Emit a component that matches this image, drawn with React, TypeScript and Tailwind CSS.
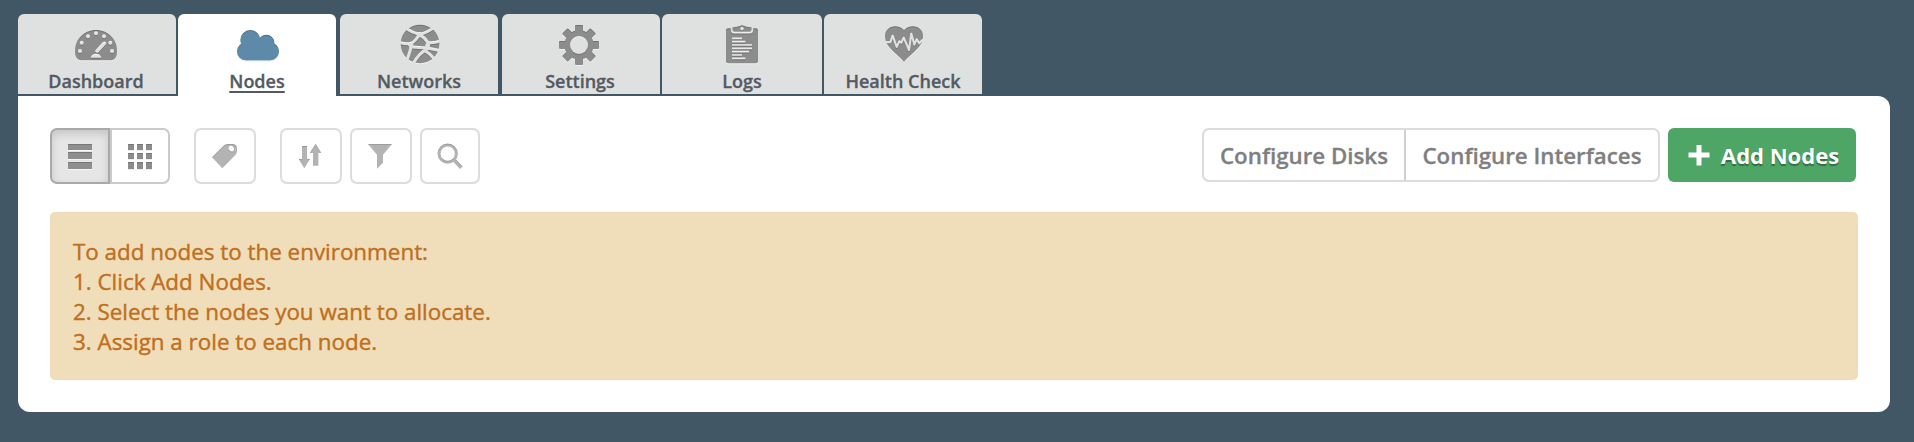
import React from "react";

type IconProps = { id: string; box: string; className: string; main: string; dark: string; light?: string; children: React.ReactNode };

// Letterpress icon: dark inner edge on top, light rim below. Drawn at 3 units per pixel.
function Engraved({ id, box, className, main, dark, light = "none", children }: IconProps) {
  return (
    <svg viewBox={box} className={className}>
      <defs>
        <mask id={id} maskUnits="userSpaceOnUse" x="-1000" y="-1000" width="3000" height="3000">
          {children}
        </mask>
      </defs>
      <g transform="translate(0 3)"><g mask={`url(#${id})`}><rect x="-900" y="-900" width="2800" height="2800" fill={light} /></g></g>
      <g mask={`url(#${id})`}>
        <rect x="-900" y="-900" width="2800" height="2800" fill={dark} />
        <g transform="translate(0 3)"><g mask={`url(#${id})`}><rect x="-900" y="-900" width="2800" height="2800" fill={main} /></g></g>
      </g>
    </svg>
  );
}

const G = { main: "#8c8c8c", dark: "#727272", light: "#f1f2f2" };
const S = { main: "#b3b3b3", dark: "#9b9b9b" };

const Dashboard = () => (
  <Engraved id="dash" box="222 87 132 102" className="mt-[6px] -ml-[2px] h-[34px] w-[44px]" {...G}>
    <path fill="#fff" d="M225 153C225 117 253 90 288 90S351 117 351 153C351 171 345 181 330 181H246C231 181 225 171 225 153Z" />
    <g fill="#000">
      {[[240, 153], [245, 128], [264, 109], [288, 100], [312, 109], [331, 128], [336, 153]].map(([x, y]) => <circle key={x} cx={x} cy={y} r="6" />)}
      <path d="M285 152 308 127Q318 121 319 131L294 158Q286 159 285 152ZM272 173Q275 161 288 161T304 173Z" />
    </g>
  </Engraved>
);

const Cloud = () => (
  <Engraved id="cloud" box="708 87 132 102" className="mt-[6px] ml-[2px] h-[34px] w-[44px]" main="#5c8aa8" dark="#4a6f87" light="#e3eaef">
    <g fill="#fff">
      <circle cx="751" cy="120" r="30" /><circle cx="799" cy="128" r="24" />
      <circle cx="738" cy="154" r="27" /><circle cx="810" cy="154" r="27" />
      <path d="M738 125H810V181H738Z" />
    </g>
  </Engraved>
);

const Networks = () => (
  <Engraved id="net" box="207 69 126 129" className="ml-[2px] h-[43px] w-[42px]" {...G}>
    <circle cx="270" cy="132" r="58" fill="#fff" />
    <g stroke="#000" strokeWidth="9" fill="none">
      <path d="M226 84Q246 98 268 103Q292 98 312 82M268 103Q258 122 242 131Q226 133 208 127M268 103Q284 112 294 128Q315 130 335 121M242 131Q244 144 238 160L230 184M241 140Q268 142 292 144L332 152M294 128V146Q268 158 249 192M282 150Q302 162 314 178" />
    </g>
    <g fill="#000"><circle cx="268" cy="104" r="8" /><circle cx="242" cy="133" r="8" /><circle cx="293" cy="136" r="7" /></g>
  </Engraved>
);

const Gear = () => (
  <Engraved id="gear" box="681 69 132 132" className="-ml-[4px] h-[44px] w-[44px]" {...G}>
    <g fill="#fff">
      <circle cx="747" cy="135" r="44" />
      {[0, 45, 90, 135].map((a) => <rect key={a} x="735" y="75" width="24" height="120" rx="3" transform={`rotate(${a} 747 135)`} />)}
    </g>
    <circle cx="747" cy="135" r="27" fill="#000" />
  </Engraved>
);

const Logs = () => (
  <Engraved id="logs" box="252 69 108 129" className="h-[43px] w-[36px]" {...G}>
    <path fill="#fff" d="M258 91Q258 85 264 85H348Q354 85 354 91V184Q354 190 348 190H264Q258 190 258 184Z" />
    <path fill="#fff" stroke="#000" strokeWidth="5" d="M275 80Q292 80 306 73Q320 80 337 80V90Q337 98 329 98H283Q275 98 275 90Z" />
    <path fill="#000" d="M250 60H274V83H250ZM338 60H362V83H338Z" />
    <circle cx="306" cy="86" r="5" fill="#000" />
    <path stroke="#000" strokeWidth="5" d="M276 115H306M276 125H316M276 135H336M276 145H336M276 155H327M276 165H306M276 175H316" />
  </Engraved>
);

const Heart = () => (
  <Engraved id="heart" box="729 75 126 117" className="mt-[2px] ml-[2px] h-[39px] w-[42px]" {...G}>
    <path fill="#fff" d="M792 91C781 76 760 76 749 83C734 92 731 110 740 130C750 151 774 164 792 186C810 164 834 151 844 130C853 110 850 92 835 83C824 76 803 76 792 91Z" />
    <path fill="none" stroke="#000" strokeWidth="6" strokeLinejoin="round" d="M733 127H751L758 107L770 141L778 124L784 128L791 113L807 150L814 101L823 134L830 118L838 130L846 121L853 121" />
  </Engraved>
);

const List = () => (
  <Engraved id="list" box="111 99 78 84" className="mt-[2px] h-[28px] w-[26px]" main="#8f8f8f" dark="#777" light="#f6f6f6">
    <path fill="#fff" d="M114 102H186V120H114ZM114 126H186V147H114ZM114 156H186V177H114Z" />
  </Engraved>
);

const Grid = () => (
  <Engraved id="grid" box="291 99 78 84" className="mt-[2px] h-[28px] w-[26px]" main="#8c8c8c" dark="#777" light="#eeeeee">
    {[294, 321, 348].map((x) => [102, 129, 156].map((y) => <rect key={`${x}-${y}`} x={x} y={y} width="18" height={y === 156 ? 21 : 18} fill="#fff" />))}
  </Engraved>
);

const Tag = () => (
  <Engraved id="tag" box="543 96 84 84" className="h-[28px] w-[28px]" {...S}>
    <path fill="#fff" d="M546 142 583 105Q588 102 595 102H610Q620 104 621 113V124Q621 129 617 134L577 175Z" />
    <ellipse cx="604" cy="116" rx="7" ry="9" fill="#000" transform="rotate(-38 604 116)" />
  </Engraved>
);

const Sort = () => (
  <Engraved id="sort" box="111 96 78 84" className="-ml-[2px] h-[28px] w-[26px]" {...S}>
    <path fill="#fff" d="M126 108H141V147H150L133 175 116 147H126ZM167 101 184 129H175V167H159V129H149Z" />
  </Engraved>
);

const Filter = () => (
  <Engraved id="filter" box="321 96 78 84" className="-ml-[2px] h-[28px] w-[26px]" {...S}>
    <path fill="#fff" d="M324 102H396L369 134V158L351 176V134Z" />
  </Engraved>
);

const Search = () => (
  <Engraved id="search" box="528 96 84 84" className="h-[28px] w-[28px]" {...S}>
    <circle cx="563" cy="131" r="26" fill="none" stroke="#fff" strokeWidth="9" />
    <path d="M582 150 604 173" stroke="#fff" strokeWidth="11" />
  </Engraved>
);

type TabProps = { icon: React.ReactNode; label: string; active?: boolean; width?: string; nudge?: string };
function Tab({ icon, label, active, width = "w-[158px]", nudge = "" }: TabProps) {
  return (
    <div className={`flex ${width} flex-col items-center rounded-t-[6px] ${active ? "h-[82px] bg-white" : "h-[80px] bg-[#dfe1e0]"}`}>
      <div className="flex h-[53px] items-start justify-center pt-[9px]">{icon}</div>
      <span className={`mt-[2px] ${nudge} whitespace-nowrap text-[18px] leading-[24px] font-semibold text-[#535a63] [-webkit-text-stroke:0.3px_#535a63] ${active ? "underline decoration-2 underline-offset-[3px]" : ""}`}>{label}</span>
    </div>
  );
}

const tool = "flex h-[56px] items-center justify-center rounded-[7px] border-2 border-[#dcdcdc] bg-white";

export default function App() {
  return (
    <div className="h-[442px] w-[1914px] bg-[#425765] pt-[14px] pl-[18px] font-['Open_Sans','Noto_Sans',sans-serif]">
      <nav className="flex h-[82px] items-start">
        <Tab icon={<Dashboard />} label="Dashboard" nudge="mr-[2px]" />
        <div className="w-[2px]" />
        <Tab icon={<Cloud />} label="Nodes" active />
        <div className="w-[4px]" />
        <Tab icon={<Networks />} label="Networks" />
        <div className="w-[4px]" />
        <Tab icon={<Gear />} label="Settings" nudge="mr-[2px]" />
        <div className="w-[2px]" />
        <Tab icon={<Logs />} label="Logs" width="w-[160px]" />
        <div className="w-[2px]" />
        <Tab icon={<Heart />} label="Health Check" />
      </nav>
      <main className="h-[316px] w-[1872px] rounded-[12px] rounded-tl-none bg-white px-[32px] pt-[32px]">
        <div className="flex h-[84px] items-start">
          <div className="flex">
            <div className="flex h-[56px] w-[60px] items-center justify-center rounded-l-[7px] border-2 border-[#a9a9a9] bg-[#e6e6e6] shadow-[inset_0_4px_8px_rgba(0,0,0,0.14)]"><List /></div>
            <div className="flex h-[56px] w-[60px] items-center justify-center rounded-r-[7px] border-2 border-l-2 border-[#cacaca] bg-white"><Grid /></div>
          </div>
          <button className={`${tool} ml-[24px] w-[62px]`}><Tag /></button>
          <button className={`${tool} ml-[24px] w-[62px]`}><Sort /></button>
          <button className={`${tool} ml-[8px] w-[62px]`}><Filter /></button>
          <button className={`${tool} ml-[8px] w-[60px]`}><Search /></button>
          <div className="ml-auto flex h-[54px] w-[458px] rounded-[7px] border-2 border-[#dcdcdc] text-[22.3px] leading-[50px] font-semibold whitespace-nowrap text-[#7f7f7f] [-webkit-text-stroke:0.3px_#7f7f7f]">
            <button className="w-[202px] border-r-2 border-[#d0d0d0] pt-[1px]">Configure Disks</button>
            <button className="flex-1 pt-[1px]">Configure Interfaces</button>
          </div>
          <button className="mr-[2px] ml-[8px] flex h-[54px] w-[188px] items-center rounded-[6px] bg-[#4da566] pl-[20px] text-[22px] font-bold whitespace-nowrap text-white">
            <svg viewBox="0 0 22 22" className="h-[22px] w-[22px]"><path d="M8.5 1H13.5V8.5H21.5V13.5H13.5V21.5H8.5V13.5H.5V8.5H8.5Z" fill="#fff" /></svg>
            <span className="ml-[11px] [text-shadow:0_2px_1px_rgba(0,0,0,0.35)]">Add Nodes</span>
          </button>
        </div>
        <div className="h-[168px] w-[1808px] rounded-[5px] bg-[#f0deba] pt-[25px] pl-[23px] text-[22.4px] leading-[30px] text-[#bf6f20] [-webkit-text-stroke:0.4px_#bf6f20]">
          <p>To add nodes to the environment:</p>
          <p>1. Click Add Nodes.</p>
          <p>2. Select the nodes you want to allocate.</p>
          <p>3. Assign a role to each node.</p>
        </div>
      </main>
    </div>
  );
}
